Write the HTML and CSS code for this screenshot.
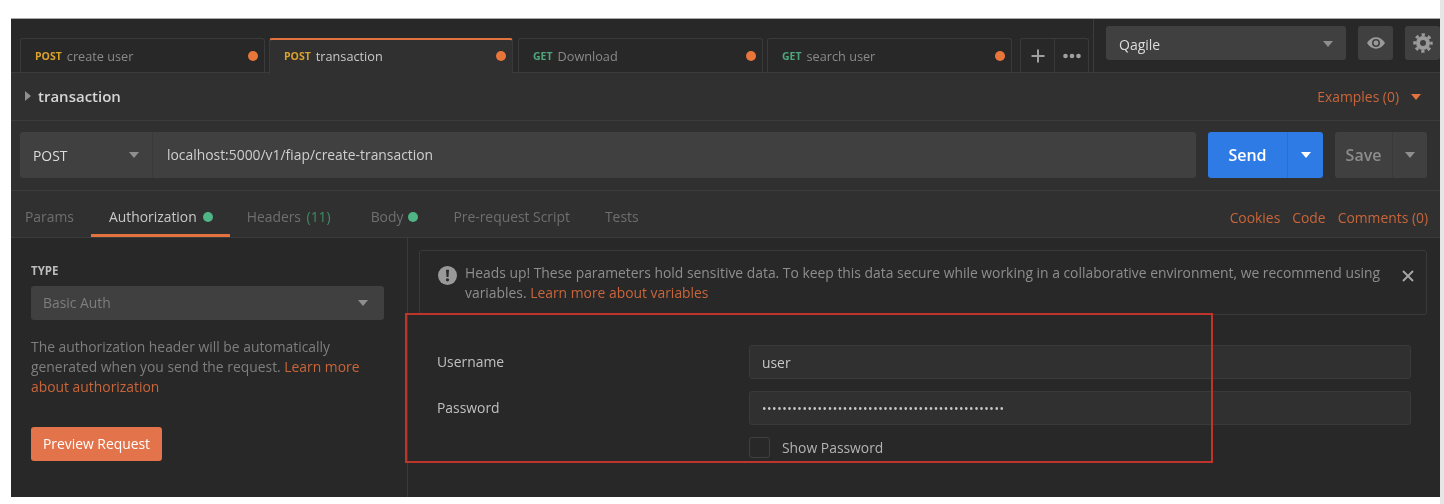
FILE: index.html
```html
<!DOCTYPE html>
<html lang="en">
<head>
<meta charset="utf-8">
<title>transaction</title>
<link rel="stylesheet" href="styles.css">
</head>
<body>
<div class="page">
  <main class="window">
    <header class="topbar">
      <div class="tabs">
        <div class="tab"><span class="verb post">POST</span><span class="tab-name">create user</span><i class="dot"></i></div>
        <div class="tab active"><span class="verb post">POST</span><span class="tab-name">transaction</span><i class="dot"></i></div>
        <div class="tab"><span class="verb get">GET</span><span class="tab-name">Download</span><i class="dot"></i></div>
        <div class="tab tab-last"><span class="verb get">GET</span><span class="tab-name">search user</span><i class="dot"></i></div>
        <div class="tab-actions">
          <div class="tab-action"><svg width="16" height="16" viewBox="0 0 16 16"><path d="M8 1.500v13M1.500 8h13" stroke="#a0a0a0" stroke-width="2"/></svg></div>
          <div class="tab-action"><svg width="20" height="6" viewBox="0 0 20 6"><circle cx="3.500" cy="3" r="2.300" fill="#a0a0a0"/><circle cx="10" cy="3" r="2.300" fill="#a0a0a0"/><circle cx="16.500" cy="3" r="2.300" fill="#a0a0a0"/></svg></div>
        </div>
      </div>
      <div class="env">
        <div class="env-select"><span>Qagile</span><i class="caret"></i></div>
        <div class="icon-btn"><svg width="20" height="14" viewBox="0 0 20 14"><path d="M1 7c2.400-3.800 5.400-5.700 9-5.700s6.600 1.900 9 5.700c-2.400 3.800-5.400 5.700-9 5.700S3.400 10.800 1 7z" fill="#9a9a9a"/><circle cx="10" cy="7" r="4" fill="#404040"/><circle cx="10" cy="7" r="2.400" fill="#9a9a9a"/></svg></div>
        <div class="icon-btn"><svg width="20" height="20" viewBox="0 0 20 20"><circle cx="10" cy="10" r="7" fill="#9a9a9a"/><circle cx="10" cy="10" r="8.300" fill="none" stroke="#9a9a9a" stroke-width="2.800" stroke-dasharray="3.300 3.220" stroke-dashoffset="1.650"/><circle cx="10" cy="10" r="3" fill="#404040"/></svg></div>
      </div>
    </header>

    <section class="title-row">
      <div class="title"><i class="caret-right"></i><span>transaction</span></div>
      <div class="examples"><span>Examples (0)</span><i class="caret orange"></i></div>
    </section>

    <section class="url-row">
      <div class="url-box">
        <div class="method"><span>POST</span><i class="caret"></i></div>
        <div class="url">localhost:5000/v1/fiap/create-transaction</div>
      </div>
      <div class="split send"><span class="split-main">Send</span><span class="split-arrow"><i class="caret white"></i></span></div>
      <div class="split save"><span class="split-main">Save</span><span class="split-arrow"><i class="caret"></i></span></div>
    </section>

    <nav class="req-tabs">
      <div class="req-left">
        <span class="req-tab">Params</span>
        <span class="req-tab current">Authorization<i class="green-dot"></i></span>
        <span class="req-tab headers">Headers <em class="count">(11)</em></span>
        <span class="req-tab">Body<i class="green-dot body-dot"></i></span>
        <span class="req-tab">Pre-request Script</span>
        <span class="req-tab">Tests</span>
      </div>
      <div class="req-right"><span>Cookies</span><span>Code</span><span>Comments (0)</span></div>
    </nav>

    <section class="content">
      <aside class="auth">
        <div class="type-label">TYPE</div>
        <div class="type-select"><span>Basic Auth</span><i class="caret"></i></div>
        <p class="auth-help">The authorization header will be automatically generated when you send the request. <span class="link">Learn more about authorization</span></p>
        <div class="preview">Preview Request</div>
      </aside>
      <div class="params">
        <div class="notice">
          <svg class="notice-icon" width="19" height="19" viewBox="0 0 19 19"><circle cx="9.500" cy="9.500" r="9.500" fill="#999"/><path d="M8 3.800h3l-.5 7.200h-2z" fill="#2a2a2a"/><circle cx="9.500" cy="13.800" r="1.600" fill="#2a2a2a"/></svg>
          <p class="notice-text">Heads up! These parameters hold sensitive data. To keep this data secure while working in a collaborative environment, we recommend using variables. <span class="link">Learn more about variables</span></p>
          <svg class="notice-close" width="12" height="12" viewBox="0 0 12 12"><path d="M1 1l10 10M11 1L1 11" stroke="#a8a8a8" stroke-width="1.800"/></svg>
        </div>
        <div class="form">
          <div class="form-row"><label>Username</label><div class="field">user</div></div>
          <div class="form-row"><label>Password</label><div class="field dots">••••••••••••••••••••••••••••••••••••••••••••••••</div></div>
          <div class="form-row check-row"><label></label><div class="check"><i class="box"></i><span>Show Password</span></div></div>
        </div>
        <div class="highlight"></div>
      </div>
    </section>
  </main>
  <div class="edge"></div>
</div>
</body>
</html>
```

FILE: styles.css
```css
* { box-sizing: border-box; }
html, body { margin: 0; height: 100%; background: #fff; overflow: hidden; }
body { font-family: "Open Sans", "Noto Sans", sans-serif; font-size: 13.880px; color: #c8c8c8; }
i { display: block; font-style: normal; }
em { font-style: normal; }
p { margin: 0; }

.page { display: flex; height: 504px; }
.window {
  margin: 18px 0 7px 11px;
  width: 1429px;
  display: flex;
  flex-direction: column;
  background: #282828;
  border-top: 1px solid #a9a9a9;
  overflow: hidden;
  filter: blur(.3px);
}
.edge { width: 4px; background: #e6e6e6; }

.caret { width: 0; height: 0; border-left: 5px solid transparent; border-right: 5px solid transparent; border-top: 6px solid #8f8f8f; }
.caret.white { border-top-color: #fff; }
.caret.orange { border-top-color: #e2733f; }

/* top bar */
.topbar { display: flex; height: 54px; flex: none; background: #282828; border-bottom: 1px solid #3c3c3c; }
.tabs { display: flex; padding: 19px 0 0 9px; width: 1083px; border-right: 1px solid #3c3c3c; }
.tab {
  display: flex; align-items: center;
  width: 245px; height: 35px; margin-right: 4px; padding: 0 6px 0 14px;
  border: 1px solid #3a3a3a; border-bottom: 0; border-radius: 3px 3px 0 0;
  color: #8a8a8a; font-size: 12.700px;
}
.tab-last { margin-right: 8px; }
.tab.active {
  position: relative; z-index: 1; height: 36px; margin: 0 5px -1px 0; width: 244px; padding-bottom: 3px;
  background: #303030; color: #c8c8c8; border-top: 2px solid #e2733f;
}
.verb { font-size: 10.500px; font-weight: 700; margin-right: 5px; }
.post { color: #d9a22c; }
.get { color: #4fa57c; }
.tab-name { flex: 1; }
.dot { width: 10px; height: 10px; border-radius: 50%; background: #e8763a; }
.tab-actions { display: flex; height: 35px; border: 1px solid #3a3a3a; border-bottom: 0; border-radius: 3px 3px 0 0; width: 69px; }
.tab-action { flex: 1; display: flex; align-items: center; justify-content: center; }
.tab-action + .tab-action { border-left: 1px solid #3a3a3a; }

.env { display: flex; flex: 1; gap: 12px; padding: 7px 0 0 12px; overflow: hidden; }
.env-select {
  display: flex; align-items: center; justify-content: space-between;
  width: 242px; height: 34px; padding: 2px 13px 0; border-radius: 3px; background: #404040; color: #dcdcdc; font-size: 14px; font-weight: 500;
}
.icon-btn { display: flex; align-items: center; justify-content: center; flex: none; width: 35px; height: 34px; border-radius: 3px; background: #404040; }

/* title */
.title-row { display: flex; align-items: center; justify-content: space-between; height: 48px; flex: none; padding: 0 19px 0 14px; background: #303030; border-bottom: 1px solid #3c3c3c; }
.title { display: flex; align-items: center; gap: 7px; padding-bottom: 2px; color: #d6d6d6; font-size: 15px; font-weight: 600; }
.caret-right { width: 0; height: 0; border-top: 5px solid transparent; border-bottom: 5px solid transparent; border-left: 6px solid #8f8f8f; }
.examples { display: flex; align-items: center; gap: 12px; color: #c9653a; }

/* url */
.url-row { display: flex; height: 70px; flex: none; padding: 11px 13px 0 9px; background: #303030; border-bottom: 1px solid #3c3c3c; }
.url-box { display: flex; width: 1176px; height: 46px; border-radius: 3px; background: #404040; overflow: hidden; }
.method { display: flex; align-items: center; justify-content: space-between; width: 133px; padding: 0 13px; border-right: 1px solid #3a3a3a; color: #dcdcdc; font-weight: 500; }
.url { display: flex; align-items: center; padding: 0 0 2px 14px; color: #cfcfcf; }
.split { display: flex; height: 46px; border-radius: 3px; }
.split-main { display: flex; align-items: center; justify-content: center; }
.split-arrow { display: flex; align-items: center; justify-content: center; border-left: 1px solid rgba(0, 0, 0, .1); }
.send { width: 115px; margin-left: 12px; background: #2f7be6; color: #fff; font-size: 16px; font-weight: 600; }
.send .split-main { width: 79px; }
.send .split-arrow { flex: 1; }
.save { width: 92px; margin-left: 12px; background: #404040; color: #8c8c8c; font-size: 16px; font-weight: 600; }
.save .split-main { width: 57px; }
.save .split-arrow { flex: 1; }

/* request tabs */
.req-tabs { display: flex; justify-content: space-between; height: 47px; flex: none; background: #303030; border-bottom: 1px solid #3c3c3c; padding-right: 12px; }
.req-left { display: flex; padding-left: 14px; }
.req-tab { display: flex; align-items: center; margin-right: 35px; height: 46px; padding-top: 5px; color: #6f6f6f; white-space: pre; }
.req-tab.current { position: relative; margin-right: 34px; color: #c8c8c8; }
.req-tab.current::after { content: ""; position: absolute; left: -18px; right: -17px; bottom: 0; height: 3px; background: #e2733f; }
.req-tab.headers { margin-right: 40px; }
.count { margin-left: 2px; color: #3f8c68; }
.green-dot { width: 10px; height: 10px; margin-left: 6px; border-radius: 50%; background: #4fb584; }
.green-dot.body-dot { margin-left: 5px; }
.req-right { display: flex; align-items: center; gap: 12px; padding-top: 6px; color: #c9653a; }

/* content */
.content { display: flex; flex: 1; min-height: 0; }
.auth { width: 397px; flex: none; padding: 24px 23px 0 20px; border-right: 1px solid #3a3a3a; }
.type-label { height: 24px; color: #bdbdbd; font-size: 11.500px; font-weight: 700; line-height: 17px; }
.type-select { display: flex; align-items: center; justify-content: space-between; height: 34px; padding: 0 16px 0 12px; border-radius: 3px; background: #404040; color: #7e7e7e; }
.type-select span { padding-bottom: 2px; }
.auth-help { margin-top: 17px; color: #7e7e7e; line-height: 20px; }
.link { color: #c9653a; }
.preview { display: flex; align-items: center; justify-content: center; width: 131px; height: 34px; margin-top: 30px; padding-bottom: 1px; border-radius: 3px; background: #e2734a; color: #fff; }

.params { position: relative; flex: 1; padding: 12px 13px 0 11px; }
.notice { display: flex; align-items: flex-start; height: 65px; padding: 9px 12px 0 18px; border: 1px solid #3a3a3a; border-radius: 3px; }
.notice-icon { flex: none; margin: 6px 8px 0 0; }
.notice-text { flex: 1; color: #8e8e8e; line-height: 20px; margin-top: 3px; }
.notice-close { flex: none; margin: 10px 0 0 15px; }
.form { padding: 30px 16px 0 18px; }
.form-row { display: flex; align-items: center; height: 34px; margin-bottom: 12px; }
.form-row label { width: 312px; flex: none; padding-bottom: 2px; color: #c0c0c0; }
.field { flex: 1; display: flex; align-items: center; height: 34px; padding: 0 12px; border: 1px solid #3a3a3a; border-radius: 3px; background: #303030; color: #c8c8c8; }
.dots { font-size: 12px; letter-spacing: .540px; }
.check-row { height: 21px; }
.check { display: flex; align-items: center; gap: 12px; color: #b4b4b4; }
.box { width: 21px; height: 21px; border: 1px solid #3f3f3f; border-radius: 3px; }
.highlight { position: absolute; left: -3px; top: 75px; width: 808px; height: 150px; border: 2px solid #c0352b; pointer-events: none; }
```
